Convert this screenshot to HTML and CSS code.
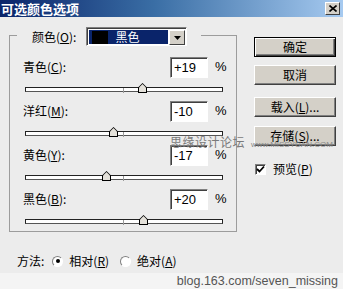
FILE: index.html
```html
<!DOCTYPE html>
<html lang="zh">
  <head>
    <meta charset="UTF-8" />
    <title>可选颜色选项</title>
    <link rel="stylesheet" href="styles.css">
  </head>
  <body>
    <div class="window">
      <!-- Title bar -->
      <div class="titlebar">
        <span class="title">可选颜色选项</span>
        <span class="close">
          <svg width="8" height="7" viewBox="0 0 8 7"><path d="M0.5 0.5 L7.5 6.5 M7.5 0.5 L0.5 6.5" stroke="#000" stroke-width="1.6"/></svg>
        </span>
      </div>

      <div class="main">
        <!-- Colour group -->
        <div class="group">
          <div class="group-head">
            <span class="head-label">颜色(<u>O</u>):</span>
            <div class="select">
              <div class="sel-item"><span class="swatch"></span><span>黑色</span></div>
              <span class="sel-arrow">
                <svg width="7" height="4" viewBox="0 0 7 4"><path d="M0 0 H7 L3.5 4 Z" fill="#000"/></svg>
              </span>
            </div>
          </div>

          <div class="rows">
            <div class="row">
              <div class="line"><span class="label">青色(<u>C</u>):</span><span class="num">+19</span><span class="pct">%</span></div>
              <div class="slider"><div class="track"></div><span class="tick"></span><span class="thumb" style="left:113px"></span></div>
            </div>
            <div class="row">
              <div class="line"><span class="label">洋红(<u>M</u>):</span><span class="num">-10</span><span class="pct">%</span></div>
              <div class="slider"><div class="track"></div><span class="tick"></span><span class="thumb" style="left:84px"></span></div>
            </div>
            <div class="row">
              <div class="line"><span class="label">黄色(<u>Y</u>):</span><span class="num">-17</span><span class="pct">%</span></div>
              <div class="slider"><div class="track"></div><span class="tick"></span><span class="thumb" style="left:77px"></span></div>
            </div>
            <div class="row">
              <div class="line"><span class="label">黑色(<u>B</u>):</span><span class="num">+20</span><span class="pct">%</span></div>
              <div class="slider"><div class="track"></div><span class="tick"></span><span class="thumb" style="left:114px"></span></div>
            </div>
          </div>
        </div>

        <!-- Buttons -->
        <div class="side">
          <button class="btn default">确定</button>
          <button class="btn cancel">取消</button>
          <button class="btn load">载入(<u>L</u>)...</button>
          <button class="btn save">存储(<u>S</u>)...</button>
          <label class="check"><span class="box"><svg width="9" height="9" viewBox="0 0 9 9"><path d="M1 4 L3.5 6.5 L8 1.5" fill="none" stroke="#000" stroke-width="1.8"/></svg></span>预览(<u>P</u>)</label>
        </div>
      </div>

      <!-- Method -->
      <div class="method">
        <span class="method-label">方法:</span>
        <span class="radio on"></span><span class="radio-text">相对(<u>R</u>)</span>
        <span class="radio"></span><span class="radio-text">绝对(<u>A</u>)</span>
      </div>

      <div class="footer">blog.163.com/seven_missing</div>

      <!-- Watermark -->
      <div class="watermark"><span class="wm-cn">思缘设计论坛</span><span class="wm-en">www.MISSYUAN.COM</span></div>
    </div>
  </body>
</html>
```
FILE: styles.css
```css
body {
  margin: 0;
  background: #ececec;
  font-family: "Noto Sans CJK SC", "Liberation Sans", sans-serif;
  font-size: 12px;
  line-height: 14px;
  color: #000;
}
u {
  text-decoration: underline;
  text-underline-offset: 1px;
}
.window {
  position: relative;
  width: 343px;
  height: 289px;
  overflow: hidden;
}
.titlebar {
  height: 17px;
  display: flex;
  align-items: center;
  justify-content: space-between;
  padding: 0 3px 0 1px;
  background: linear-gradient(to right, #0a246a 0%, #3a6ea5 45%, #a6caf0 100%);
}
.title {
  color: #fff;
  font-weight: bold;
  font-size: 13px;
  line-height: 17px;
}
.close {
  width: 13px;
  height: 11px;
  display: flex;
  align-items: center;
  justify-content: center;
  background: #d4d0c8;
  border: 1px solid;
  border-color: #fff #404040 #404040 #fff;
}
.main {
  display: flex;
  padding-left: 9px;
}
.group {
  box-sizing: border-box;
  width: 228px;
  height: 197px;
  margin-top: 18px;
  border: 1px solid #9c9c9c;
}
.group-head {
  display: flex;
  align-items: center;
  width: fit-content;
  height: 19px;
  margin: -9px 0 0 7px;
  padding: 0 14px 0 15px;
  background: #ececec;
}
.head-label {
  margin-right: 10px;
}
.select {
  box-sizing: border-box;
  width: 101px;
  height: 19px;
  display: flex;
  padding: 1px;
  background: #fff;
  border: 1px solid;
  border-color: #808080 #fff #fff #808080;
  box-shadow: inset 1px 1px #404040;
}
.sel-item {
  flex: 1;
  display: flex;
  align-items: center;
  margin: 1px 1px 0 1px;
  background: #0a246a;
  color: #fff;
}
.swatch {
  width: 16px;
  height: 13px;
  margin: 0 7px 0 3px;
  background: #000;
}
.sel-arrow {
  box-sizing: border-box;
  width: 16px;
  height: 15px;
  margin-top: 1px;
  display: flex;
  align-items: center;
  justify-content: center;
  background: #d4d0c8;
  border: 1px solid;
  border-color: #fff #404040 #404040 #fff;
}
.rows {
  display: flex;
  flex-direction: column;
  gap: 4px;
  margin-top: 11px;
}
.line {
  display: flex;
  align-items: center;
  height: 20px;
  padding-left: 13px;
}
.label {
  width: 147px;
}
.num {
  box-sizing: border-box;
  width: 38px;
  height: 21px;
  padding: 1px 0 0 3px;
  background: #fff;
  border: 1px solid;
  border-color: #808080 #fff #fff #808080;
  box-shadow: inset 1px 1px #404040;
  font-family: "Liberation Sans", sans-serif;
  font-size: 13px;
  line-height: 18px;
}
.pct {
  margin-left: 7px;
  font-family: "Liberation Sans", sans-serif;
  font-size: 13px;
}
.slider {
  position: relative;
  box-sizing: border-box;
  width: 198px;
  height: 20px;
  margin-left: 15px;
  padding-top: 10px;
}
.track {
  box-sizing: border-box;
  height: 5px;
  background: #fff;
  border: 1px solid #222;
  border-bottom-color: #555;
}
.tick {
  position: absolute;
  left: 98px;
  top: 11px;
  width: 1px;
  height: 5px;
  background: #9a9a9a;
}
.thumb {
  position: absolute;
  top: 6px;
  width: 9px;
  height: 10px;
  background: #000;
  clip-path: polygon(50% 0, 100% 45%, 100% 100%, 0 100%, 0 45%);
}
.thumb::after {
  content: "";
  position: absolute;
  left: 1px;
  top: 1px;
  width: 7px;
  height: 8px;
  background: #e4e1da;
  clip-path: polygon(50% 0, 100% 45%, 100% 100%, 0 100%, 0 45%);
}
.side {
  display: flex;
  flex-direction: column;
  margin-left: 17px;
  padding-top: 20px;
}
.btn {
  box-sizing: border-box;
  width: 82px;
  height: 20px;
  padding: 0;
  background: #d4d0c8;
  border: 1px solid;
  border-color: #fff #404040 #404040 #fff;
  box-shadow: inset -1px -1px #808080;
  font-family: "Noto Sans CJK SC", "Liberation Sans", sans-serif;
  font-size: 12px;
  line-height: 16px;
  color: #000;
}
.btn.default {
  border-color: #000;
  box-shadow: inset 1px 1px #fff, inset -1px -1px #404040, inset -2px -2px #808080;
}
.btn.cancel {
  margin-top: 8px;
}
.btn.load {
  margin-top: 12px;
}
.btn.save {
  margin-top: 9px;
}
.check {
  display: flex;
  align-items: center;
  margin: 16px 0 0 1px;
}
.box {
  box-sizing: border-box;
  width: 11px;
  height: 11px;
  margin-right: 7px;
  display: flex;
  align-items: center;
  justify-content: center;
  background: #fff;
  border: 1px solid;
  border-color: #808080 #fff #fff #808080;
  box-shadow: inset 1px 1px #404040;
}
.method {
  display: flex;
  align-items: center;
  height: 16px;
  margin-top: 21px;
  padding-left: 17px;
}
.method-label {
  margin-right: 8px;
}
.radio {
  box-sizing: border-box;
  width: 11px;
  height: 11px;
  margin-right: 6px;
  border-radius: 50%;
  background: #fff;
  border: 1px solid;
  border-color: #808080 #fff #fff #808080;
  display: flex;
  align-items: center;
  justify-content: center;
}
.radio.on::after {
  content: "";
  width: 4px;
  height: 4px;
  border-radius: 50%;
  background: #000;
}
.radio-text {
  margin-right: 11px;
}
.footer {
  height: 16px;
  margin-top: 4px;
  padding-right: 5px;
  background: #f4f4f4;
  text-align: right;
  font-family: "Liberation Sans", sans-serif;
  font-size: 12.5px;
  line-height: 16px;
  color: #555;
}
.watermark {
  position: absolute;
  left: 170px;
  top: 135px;
  display: flex;
  align-items: baseline;
  color: #7a7a7a;
}
.wm-cn {
  font-size: 12px;
  letter-spacing: 0.5px;
}
.wm-en {
  margin-left: 6px;
  font-family: "Liberation Sans", sans-serif;
  font-size: 8px;
  color: #8a8a8a;
}
```
